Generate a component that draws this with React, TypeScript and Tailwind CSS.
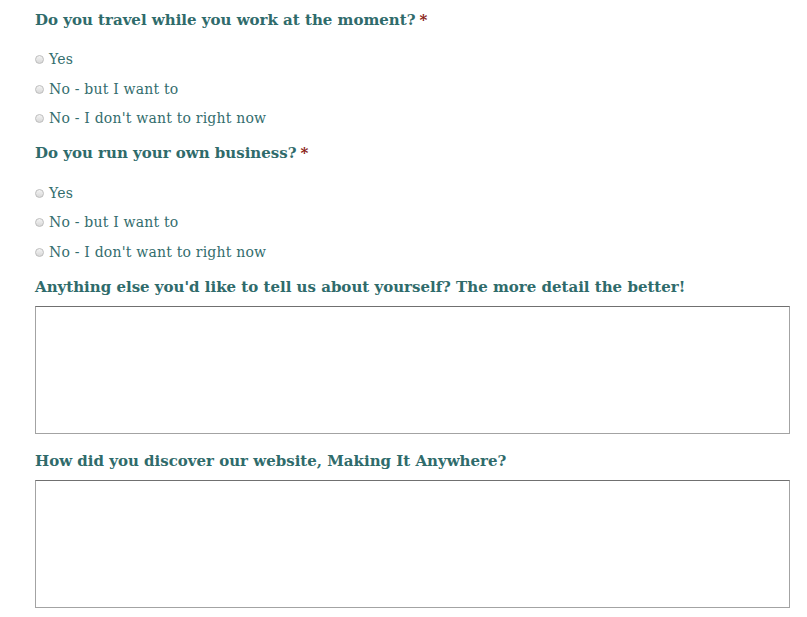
import React from 'react';

const heading = "font-['DejaVu_Serif',serif] font-bold text-[15px] leading-[20px] h-[20px] text-[#2f6b6b] whitespace-nowrap";

function Radio({ label }: { label: string }) {
  return (
    <label className="flex items-center h-[29.5px] gap-[5px] text-[#336d6d] text-[14px] tracking-[0.2px] font-['DejaVu_Serif',serif]">
      <span className="w-[9px] h-[9px] rounded-full border border-[#bdbdbd] bg-linear-to-b from-[#f4f4f4] to-[#d8d8d8] shrink-0" />
      {label}
    </label>
  );
}

function Question({ title, className, gap }: { title: string; className: string; gap: string }) {
  return (
    <div className={className}>
      <div className={heading}>
        {title}
        <span className="text-[#8a1c14] ml-[4px]">*</span>
      </div>
      <div className={gap + ' flex flex-col'}>
        <Radio label="Yes" />
        <Radio label="No - but I want to" />
        <Radio label="No - I don't want to right now" />
      </div>
    </div>
  );
}

export default function App() {
  return (
    <div className="w-[807px] h-[617px] bg-white pl-[35px] pr-[17px] pt-[10px]">
      <Question title="Do you travel while you work at the moment?" className="" gap="mt-[15px]" />
      <Question title="Do you run your own business?" className="mt-[9px]" gap="mt-[16px]" />
      <div className={heading + ' mt-[10px]'}>
        Anything else you'd like to tell us about yourself? The more detail the better!
      </div>
      <div className="mt-[9px] h-[128px] border border-[#a3a3a3] border-t-[#707070]" />
      <div className={heading + ' mt-[17px]'}>How did you discover our website, Making It Anywhere?</div>
      <div className="mt-[9px] h-[128px] border border-[#a3a3a3] border-t-[#707070]" />
    </div>
  );
}
